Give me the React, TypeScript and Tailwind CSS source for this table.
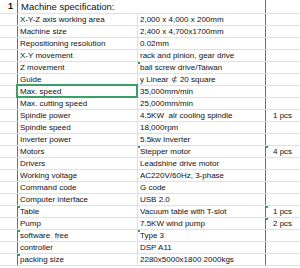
import React from "react";

type Row = {
  label: string;
  value: string;
  qty?: string;
  mark?: ("label" | "value" | "qty")[];
  selected?: boolean;
};

const ROWS: Row[] = [
  { label: "X-Y-Z axis working area", value: "2,000 x 4,000 x 200mm" },
  { label: "Machine size", value: "2,400 x 4,700x1700mm" },
  { label: "Repositioning resolution", value: "0.02mm" },
  { label: "X-Y movement", value: "rack and pinion, gear drive" },
  { label: "Z movement", value: "ball screw drive/Taiwan", mark: ["value"] },
  { label: "Guide", value: "y Linear \u2284 20 square" },
  { label: "Max. speed", value: "35,000mm/min", selected: true },
  { label: "Max. cutting speed", value: "25,000mm/min" },
  { label: "Spindle power", value: "4.5KW\u00a0 air cooling spindle", qty: "1 pcs" },
  { label: "Spindle speed", value: "18,000rpm" },
  { label: "Inverter power", value: "5.5kw Inverter" },
  { label: "Motors", value: "Stepper motor", qty: "4 pcs", mark: ["value", "qty"] },
  { label: "Drivers", value: "Leadshine drive motor" },
  { label: "Working voltage", value: "AC220V/60Hz, 3-phase" },
  { label: "Command code", value: "G code" },
  { label: "Computer interface", value: "USB 2.0" },
  { label: "Table", value: "Vacuum table with T-slot", qty: "1 pcs", mark: ["label", "qty"] },
  { label: "Pump", value: "7.5KW wind pump", qty: "2 pcs", mark: ["qty"] },
  { label: "software\u00a0 free", value: "Type 3", mark: ["label", "value"] },
  { label: "controller", value: "DSP A11" },
  { label: "packing size", value: "2280x5000x1800 2000kgs", mark: ["label"] },
];

// little green error triangle Excel draws in a cell's corner
const Mark = () => (
  <span className="absolute left-0 top-0 w-[2px] h-[2px] bg-[#2fa35a]" />
);

export default function App() {
  return (
    <div
      className="w-[300px] h-[268px] overflow-hidden bg-white text-[#111] text-[8px]"
      style={{ fontFamily: '"Liberation Sans", Arial, sans-serif' }}
    >
      {/* title row */}
      <div className="flex h-[14px] border-b border-[#dde1e7]">
        <div className="w-[18px] shrink-0 border-r border-[#6e6e6e] flex items-center justify-end pr-[4px] font-bold text-[9px]">
          1
        </div>
        <div className="w-[248px] shrink-0 border-r border-[#6e6e6e] flex items-center pl-[3px] text-[9.5px] leading-[13px]">
          Machine specification:
        </div>
        <div className="flex-1" />
      </div>

      {ROWS.map((r) => (
        <div key={r.label} className="flex h-[12px] border-b border-[#dde1e7] leading-[11px]">
          <div className="w-[18px] shrink-0 border-r border-[#6e6e6e]" />
          <div className="relative w-[120px] shrink-0 border-r border-[#dde1e7] flex items-center pl-[2px] whitespace-pre">
            {r.mark?.includes("label") && <Mark />}
            {r.label}
            {r.selected && (
              <span className="absolute -left-[2px] -top-[2px] w-[122px] h-[14px] border-2 border-[#3a9f68]" />
            )}
          </div>
          <div className="relative w-[128px] shrink-0 border-r border-[#6e6e6e] flex items-center pl-[2px] whitespace-pre">
            {r.mark?.includes("value") && <Mark />}
            {r.value}
          </div>
          <div className="relative flex-1 flex items-center pl-[7px] whitespace-pre">
            {r.mark?.includes("qty") && <Mark />}
            {r.qty}
          </div>
        </div>
      ))}
    </div>
  );
}
